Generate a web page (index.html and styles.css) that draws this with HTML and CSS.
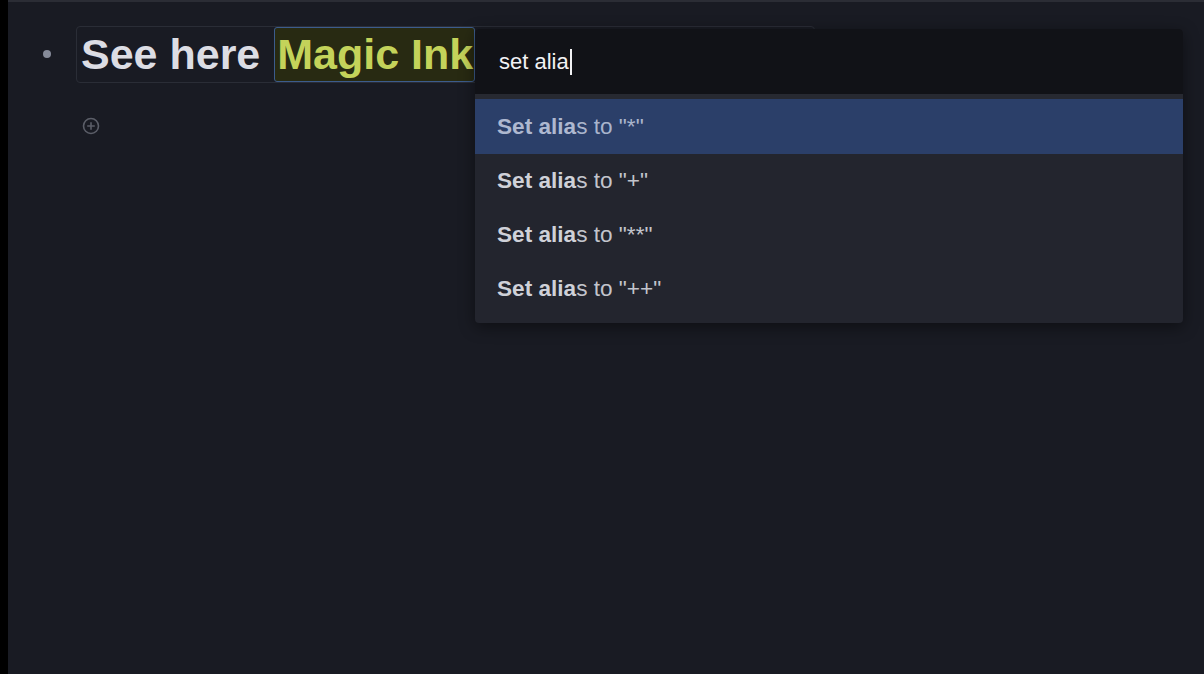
FILE: index.html
```html
<!DOCTYPE html>
<html lang="en">
<head>
    <meta charset="UTF-8">
    <meta name="viewport" content="width=device-width, initial-scale=1.0">
    <title>Magic Ink</title>
    <link rel="stylesheet" href="styles.css">
</head>
<body>
    <div class="edge"></div>
    <main class="page">
        <div class="topline"></div>

        <div class="outline">
            <div class="row">
                <span class="bullet"></span>
                <div class="block">See here&nbsp;<span class="ink">Magic Ink</span></div>
            </div>

            <div class="add-row">
                <svg class="add-icon" width="18" height="18" viewBox="0 0 18 18">
                    <circle cx="9" cy="9" r="7.5" fill="none" stroke="#5b5e68" stroke-width="1.6"/>
                    <path d="M9 5.2v7.6M5.2 9h7.6" stroke="#5b5e68" stroke-width="1.6"/>
                </svg>
            </div>
        </div>

        <!-- command popup, lies over the block -->
        <div class="popup">
            <div class="popup-input">set alia<span class="caret"></span></div>
            <ul class="popup-list">
                <li class="active"><b>Set alia</b>s to "*"</li>
                <li><b>Set alia</b>s to "+"</li>
                <li><b>Set alia</b>s to "**"</li>
                <li><b>Set alia</b>s to "++"</li>
            </ul>
        </div>
    </main>
</body>
</html>
```

FILE: styles.css
```css
body {
    margin: 0;
    padding: 0;
    display: flex;
    height: 100vh;
    overflow: hidden;
    background-color: #191b23;
    font-family: "Liberation Sans", Arial, sans-serif;
}

.edge {
    width: 8px;
    background-color: #000;
    flex-shrink: 0;
}

.page {
    flex: 1;
    position: relative;
    display: flex;
    flex-direction: column;
}

.topline {
    height: 2px;
    background-color: #2b2d35;
}

.outline {
    padding-top: 24px;
    display: flex;
    flex-direction: column;
}

.row {
    display: flex;
    align-items: center;
}

.bullet {
    width: 8px;
    height: 8px;
    border-radius: 50%;
    background-color: #868b99;
    margin-left: 35px;
    margin-right: 25px;
    margin-top: -2px;
}

.block {
    width: 739px;
    box-sizing: border-box;
    border: 1px solid #2a2d36;
    border-radius: 4px;
    padding-left: 4px;
    font-size: 43px;
    font-weight: bold;
    line-height: 53px;
    color: #dcdde4;
    white-space: nowrap;
}

.ink {
    display: inline-block;
    margin-left: 2px;
    background-color: #282a12;
    border: 1px solid #3c5c8c;
    border-radius: 3px;
    color: #c4d35a;
    padding: 0 1px 0 2px;
}

.add-row {
    padding-left: 74px;
    padding-top: 34px;
}

.add-icon {
    display: block;
}

.popup {
    position: absolute;
    left: 467px;
    top: 29px;
    width: 708px;
    background-color: #23252e;
    border-radius: 4px;
    overflow: hidden;
    box-shadow: 0 4px 16px rgba(0, 0, 0, 0.45);
}

.popup-input {
    height: 65px;
    display: flex;
    align-items: center;
    padding-left: 24px;
    background-color: #111217;
    color: #f2f2f4;
    font-size: 22px;
    border-bottom: 5px solid #272931;
}

.caret {
    width: 2px;
    height: 26px;
    background-color: #f2f2f4;
    margin-left: 1px;
}

.popup-list {
    list-style: none;
    margin: 0;
    padding: 0 0 7px 0;
}

.popup-list li {
    height: 54px;
    display: flex;
    align-items: center;
    padding-left: 22px;
    font-size: 22.6px;
    color: #c2c4cc;
}

.popup-list li b {
    color: #cfd1d8;
}

.popup-list li.active {
    height: 55px;
    background-color: #2b3f69;
    color: #a9b4cc;
}

.popup-list li.active b {
    color: #aeb8d0;
}
```
